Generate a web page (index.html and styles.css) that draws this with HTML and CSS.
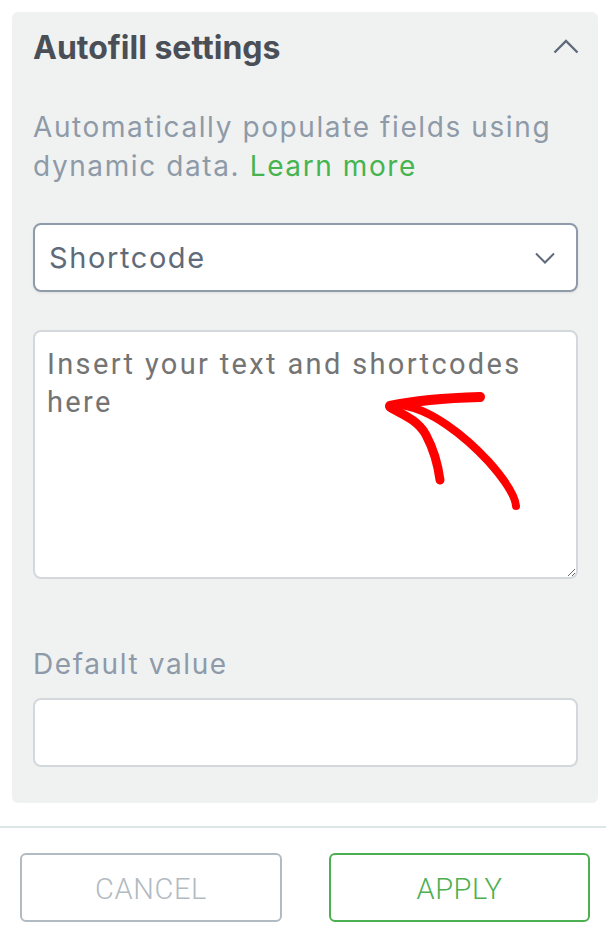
FILE: index.html
```html
<!DOCTYPE html>
<html lang="en">
<head>
<meta charset="utf-8">
<title>Autofill settings</title>
<link rel="stylesheet" href="styles.css">
</head>
<body>
<div class="panel">
  <div class="panel-header">
    <h2 class="panel-title">Autofill settings</h2>
    <svg class="caret" width="26" height="16" viewBox="0 0 26 16"><path d="M1.5 13.5 L13 2 L24.5 13.5" fill="none" stroke="#5f6b7a" stroke-width="2.4"/></svg>
  </div>
  <p class="desc">Automatically populate fields using dynamic data. <a class="learn" href="#">Learn more</a></p>
  <div class="select">
    <span class="select-text">Shortcode</span>
    <svg class="chev" width="20" height="12" viewBox="0 0 20 12"><path d="M1 1.5 L10 10.5 L19 1.5" fill="none" stroke="#5f6b7a" stroke-width="2"/></svg>
  </div>
  <div class="ta-wrap">
    <textarea class="ta" placeholder="Insert your text and shortcodes here"></textarea>
    <svg class="arrow" width="545" height="249" viewBox="0 0 545 249">
      <path d="M357 76 C 380 71, 410 68, 447 67" fill="none" stroke="#ff0000" stroke-width="10" stroke-linecap="round"/>
      <path d="M357 77 C 363 82, 384 88, 393 105 C 401 120, 405 135, 407 150" fill="none" stroke="#ff0000" stroke-width="9" stroke-linecap="round"/>
      <path d="M367 75 C 397 78, 432 106, 456 132 C 471 149, 482 164, 483 176" fill="none" stroke="#ff0000" stroke-width="8" stroke-linecap="round"/>
    </svg>
  </div>
  <label class="label">Default value</label>
  <div class="input"></div>
</div>
<div class="divider"></div>
<div class="actions">
  <button class="btn btn-cancel">CANCEL</button>
  <button class="btn btn-apply">APPLY</button>
</div>
</body>
</html>
```
FILE: styles.css
```css
html, body {
  margin: 0;
  padding: 0;
  background: #ffffff;
}
body {
  font-family: Inter, "Noto Sans", sans-serif;
  width: 606px;
}
.panel {
  margin: 12px 8px 0 12px;
  background: #f0f2f2;
  border-radius: 6px;
  padding: 0 20px 36px 21px;
}
.panel-header {
  height: 70px;
  display: flex;
  align-items: center;
  justify-content: space-between;
}
.panel-title {
  margin: 0;
  font-size: 32px;
  font-weight: 700;
  color: #4a4f57;
  letter-spacing: 0;
}
.caret {
  margin-right: -1px;
  margin-top: 0;
}
.desc {
  margin: 26px 0 0 0;
  font-size: 28px;
  line-height: 39px;
  letter-spacing: 1.6px;
  color: #8e9aa8;
}
.learn {
  color: #46b450;
  text-decoration: none;
}
.select {
  margin-top: 37px;
  height: 69px;
  box-sizing: border-box;
  border: 2px solid #8f9baa;
  border-radius: 8px;
  background: #fff;
  display: flex;
  align-items: center;
  justify-content: space-between;
  padding: 0 21px 0 14px;
  box-shadow: 0 1px 3px rgba(0,0,0,0.08);
}
.select-text {
  font-size: 29px;
  letter-spacing: 1.6px;
  color: #5f6b7a;
}
.ta-wrap {
  position: relative;
  margin-top: 38px;
  height: 249px;
}
.ta {
  display: block;
  width: 100%;
  height: 249px;
  box-sizing: border-box;
  border: 2px solid #d3d8dc;
  border-radius: 8px;
  background: #fff;
  padding: 13px 12px;
  font-family: Roboto, "Liberation Sans", sans-serif;
  font-size: 29px;
  line-height: 38px;
  letter-spacing: 2.35px;
  color: #333;
  resize: vertical;
  outline: none;
}
.ta::placeholder {
  color: #747474;
}
.arrow {
  position: absolute;
  left: 0;
  top: 0;
  pointer-events: none;
}
.label {
  display: block;
  margin-top: 66px;
  font-size: 28px;
  line-height: 39px;
  letter-spacing: 1.6px;
  color: #8e9aa8;
}
.input {
  margin-top: 14px;
  height: 69px;
  box-sizing: border-box;
  border: 2px solid #d3d8dc;
  border-radius: 8px;
  background: #fff;
}
.divider {
  margin-top: 23px;
  height: 2px;
  background: #dde5e6;
}
.actions {
  display: flex;
  justify-content: space-between;
  padding: 25px 16px 0 20px;
}
.btn {
  width: 262px;
  height: 69px;
  box-sizing: border-box;
  border-radius: 6px;
  background: #fff;
  font-family: Roboto, "Liberation Sans", sans-serif;
  font-size: 29px;
  font-weight: 300;
  letter-spacing: 0.6px;
  padding-top: 3px;
}
.btn-cancel {
  border: 2px solid #b2bac2;
  color: #b2bac2;
}
.btn-apply {
  width: 261px;
  border: 2px solid #4caf50;
  color: #4caf50;
}
```
